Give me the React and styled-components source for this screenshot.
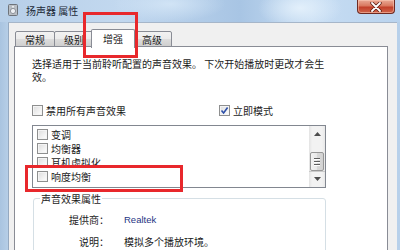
import React from 'react';
import styled, { createGlobalStyle } from 'styled-components';

const GlobalStyle = createGlobalStyle`
  html, body {
    margin: 0;
    padding: 0;
  }
  body {
    width: 400px;
    height: 250px;
    overflow: hidden;
    font-family: "Noto Sans CJK SC", "Liberation Sans", sans-serif;
    font-size: 10px;
    color: #1b1b1b;
  }
`;

const tabs = ['常规', '级别', '增强', '高级'];

const effects = ['变调', '均衡器', '耳机虚拟化', '响度均衡'];

const App = () => {
    return (
        <>
            <GlobalStyle />
            <Window>
                <TitleBar>
                    <WindowIcon viewBox="0 0 10 12">
                        <rect x="0.5" y="0.5" width="9" height="11" rx="1" fill="#b9bec4" stroke="#6d737a" />
                        <circle cx="5" cy="7" r="2.6" fill="#eef1f4" stroke="#7c828a" strokeWidth="0.8" />
                        <circle cx="5" cy="2.8" r="1" fill="#eef1f4" />
                    </WindowIcon>
                    <Title>扬声器 属性</Title>
                    <CloseButton>
                        <svg width="12" height="10" viewBox="0 0 12 10">
                            <path d="M2 1 L10 9 M10 1 L2 9" stroke="#5b1d14" strokeWidth="3.4" strokeLinecap="round" />
                            <path d="M2 1 L10 9 M10 1 L2 9" stroke="#fff" strokeWidth="1.8" strokeLinecap="round" />
                        </svg>
                    </CloseButton>
                </TitleBar>

                <Client>
                    <TabStrip>
                        {tabs.map((tab) => (
                            <Tab key={tab} $active={tab === '增强'}>
                                {tab}
                            </Tab>
                        ))}
                    </TabStrip>

                    <TabPage>
                        <Description>
                            选择适用于当前聆听配置的声音效果。 下次开始播放时更改才会生
                            <br />
                            效。
                        </Description>

                        <OptionRow>
                            <Option $width={187}>
                                <CheckBox />
                                禁用所有声音效果
                            </Option>
                            <Option>
                                <CheckBox $checked>
                                    <svg width="9" height="9" viewBox="0 0 9 9">
                                        <path d="M1.5 4.5 L3.6 7 L7.6 1.5" fill="none" stroke="#2c4fa8" strokeWidth="1.6" />
                                    </svg>
                                </CheckBox>
                                立即模式
                            </Option>
                        </OptionRow>

                        <ListBox>
                            <ListItems>
                                {effects.map((name) => (
                                    <ListItem key={name}>
                                        <CheckBox />
                                        {name}
                                    </ListItem>
                                ))}
                            </ListItems>
                            <ScrollBar>
                                <ArrowButton>
                                    <svg width="7" height="4" viewBox="0 0 7 4">
                                        <path d="M0 4 L3.5 0 L7 4 Z" fill="#4d4d4d" />
                                    </svg>
                                </ArrowButton>
                                <Track $height={10} />
                                <Thumb>
                                    <Grip />
                                    <Grip />
                                    <Grip />
                                </Thumb>
                                <Track $height={0} />
                                <ArrowButton $bordered>
                                    <svg width="7" height="4" viewBox="0 0 7 4">
                                        <path d="M0 0 L3.5 4 L7 0 Z" fill="#4d4d4d" />
                                    </svg>
                                </ArrowButton>
                            </ScrollBar>
                        </ListBox>

                        <GroupBox>
                            <legend>声音效果属性</legend>
                            <PropRow>
                                <PropLabel>提供商：</PropLabel>
                                <PropValue $vendor>Realtek</PropValue>
                            </PropRow>
                            <PropRow>
                                <PropLabel>说明：</PropLabel>
                                <PropValue>模拟多个播放环境。</PropValue>
                            </PropRow>
                        </GroupBox>
                    </TabPage>
                </Client>

                {/* annotation boxes drawn over the screenshot */}
                <Highlight $left={83} $top={12} $width={55} $height={46} />
                <Highlight $left={25} $top={165} $width={158} $height={27} />
            </Window>
        </>
    );
};

export default App;


// Styled Components

const Window = styled.div`
    position: relative;
    width: 400px;
    height: 250px;
    display: flex;
    flex-direction: column;
    overflow: hidden;
    background: linear-gradient(90deg, #a9c4e0 0%, #bcd3ea 3%, #c3d8ee 50%, #b7d0ea 100%);
`;

const TitleBar = styled.div`
    height: 22px;
    flex: none;
    display: flex;
    align-items: flex-start;
    padding-left: 8px;
    background:
        radial-gradient(ellipse 60px 30px at 300px 8px, rgba(230, 242, 252, 0.9), rgba(230, 242, 252, 0) 70%),
        radial-gradient(ellipse 80px 25px at 170px 4px, rgba(220, 236, 250, 0.7), rgba(220, 236, 250, 0) 70%),
        linear-gradient(90deg, #b7cfe8 0%, #c2d8ef 30%, #a8c5e4 60%, #c7ddf3 78%, #b9d3ee 100%);
`;

const WindowIcon = styled.svg`
    width: 10px;
    height: 12px;
    margin-top: 4px;
`;

const Title = styled.div`
    margin-left: 8px;
    margin-top: 4px;
    line-height: 13px;
    font-size: 10px;
    color: #1e2a38;
`;

const CloseButton = styled.div`
    margin-left: auto;
    margin-right: 5px;
    width: 38px;
    height: 14px;
    display: flex;
    align-items: center;
    justify-content: center;
    box-sizing: border-box;
    border: 1px solid #6e2a22;
    border-top: none;
    border-radius: 0 0 4px 4px;
    background: linear-gradient(180deg, #e9a995 0%, #d9785f 45%, #c2402a 55%, #d0654b 100%);
    box-shadow: inset 0 0 0 1px rgba(255, 210, 190, 0.5);
`;

const Client = styled.div`
    flex: 1;
    display: flex;
    flex-direction: column;
    margin: 0 3px 0 8px;
    padding: 6px 9px 0 5px;
    background: #f0f0f0;
    border-top: 1px solid #a6b6c9;
    border-left: 1px solid #95a9c0;
    box-sizing: border-box;
    min-height: 0;
`;

const TabStrip = styled.div`
    display: flex;
    align-items: flex-end;
    height: 18px;
    padding-left: 1px;
    position: relative;
    z-index: 1;
`;

const Tab = styled.div`
    height: ${(p) => (p.$active ? '19px' : '16px')};
    box-sizing: border-box;
    padding: ${(p) => (p.$active ? '2px 11px 0' : '1px 9px 0')};
    margin: ${(p) => (p.$active ? '0 -2px -1px -3px' : '0 0 0 -1px')};
    border: 1px solid #898c95;
    border-bottom: ${(p) => (p.$active ? 'none' : '1px solid #898c95')};
    border-radius: 2px 2px 0 0;
    background: ${(p) => (p.$active ? '#ffffff' : 'linear-gradient(180deg, #f2f2f2 0%, #ebebeb 50%, #dddddd 51%, #cfcfcf 100%)')};
    position: relative;
    z-index: ${(p) => (p.$active ? 2 : 1)};
    font-size: 10px;
    line-height: 13px;
    color: #1b1b1b;

    &:first-child {
        margin-left: 0;
    }
`;

const TabPage = styled.div`
    flex: 1;
    background: #ffffff;
    border: 1px solid #898c95;
    padding: 10px 0 0 17px;
    box-sizing: border-box;
    margin-top: -1px;
`;

const Description = styled.p`
    margin: 0;
    line-height: 13px;
    white-space: nowrap;
`;

const OptionRow = styled.div`
    display: flex;
    align-items: center;
    height: 13px;
    margin-top: 21px;
`;

const Option = styled.label`
    display: flex;
    align-items: center;
    gap: 3px;
    width: ${(p) => (p.$width ? `${p.$width}px` : 'auto')};
    line-height: 13px;
`;

const CheckBox = styled.span`
    width: 11px;
    height: 11px;
    flex: none;
    box-sizing: border-box;
    border: 1px solid #8e8f8f;
    background: linear-gradient(135deg, #dcdcdc 0%, #f0f0f0 55%, #ffffff 100%);
    box-shadow: inset 0 0 0 1px #f4f4f4;
    display: flex;
    align-items: center;
    justify-content: center;
    background-color: ${(p) => (p.$checked ? '#fff' : 'transparent')};
`;

const ListBox = styled.div`
    display: flex;
    width: 294px;
    height: 63px;
    margin-top: 8px;
    box-sizing: border-box;
    border: 1px solid #828790;
`;

const ListItems = styled.div`
    flex: 1;
    padding-top: 1px;
    overflow: hidden;
`;

const ListItem = styled.div`
    display: flex;
    align-items: center;
    gap: 3px;
    height: 14px;
    padding-left: 4px;
    line-height: 13px;
    white-space: nowrap;
`;

const ScrollBar = styled.div`
    width: 16px;
    display: flex;
    flex-direction: column;
    background: linear-gradient(90deg, #e3e3e3 0%, #f2f2f2 20%, #f2f2f2 80%, #e8e8e8 100%);
`;

const ArrowButton = styled.div`
    height: ${(p) => (p.$bordered ? '15px' : '16px')};
    display: flex;
    align-items: center;
    justify-content: center;
    box-sizing: border-box;
    border-top: ${(p) => (p.$bordered ? '1px solid #c9c9c9' : 'none')};
`;

const Track = styled.div`
    height: ${(p) => p.$height}px;
`;

const Thumb = styled.div`
    height: 19px;
    margin: 0 1px;
    box-sizing: border-box;
    border: 1px solid #979797;
    border-radius: 2px;
    background: linear-gradient(90deg, #f3f3f3 0%, #e8e8e8 50%, #d9d9d9 51%, #d2d2d2 100%);
    display: flex;
    flex-direction: column;
    align-items: center;
    justify-content: center;
    gap: 2px;
`;

const Grip = styled.div`
    width: 6px;
    height: 1px;
    background: #5e5e5e;
    box-shadow: 0 1px 0 #ffffff;
`;

const GroupBox = styled.fieldset`
    width: 293px;
    margin: 4px 0 0 1px;
    padding: 8px 0 12px 6px;
    box-sizing: border-box;
    border: 1px solid #d5dfe5;
    border-radius: 3px;

    legend {
        padding: 0 1px;
        line-height: 13px;
        font-size: 10px;
    }
`;

const PropRow = styled.div`
    display: grid;
    grid-template-columns: 69px 1fr;
    column-gap: 15px;
    line-height: 13px;
    margin-bottom: 9px;
`;

const PropLabel = styled.div`
    text-align: right;
`;

const PropValue = styled.div`
    color: ${(p) => (p.$vendor ? '#1f3584' : '#1b1b1b')};
    font-family: ${(p) => (p.$vendor ? '"Liberation Sans", Arial, sans-serif' : 'inherit')};
    font-size: ${(p) => (p.$vendor ? '9.5px' : '10px')};
`;

const Highlight = styled.div`
    position: absolute;
    left: ${(p) => p.$left}px;
    top: ${(p) => p.$top}px;
    width: ${(p) => p.$width}px;
    height: ${(p) => p.$height}px;
    box-sizing: border-box;
    border: 3px solid #e8282c;
    pointer-events: none;
    z-index: 10;
`;
